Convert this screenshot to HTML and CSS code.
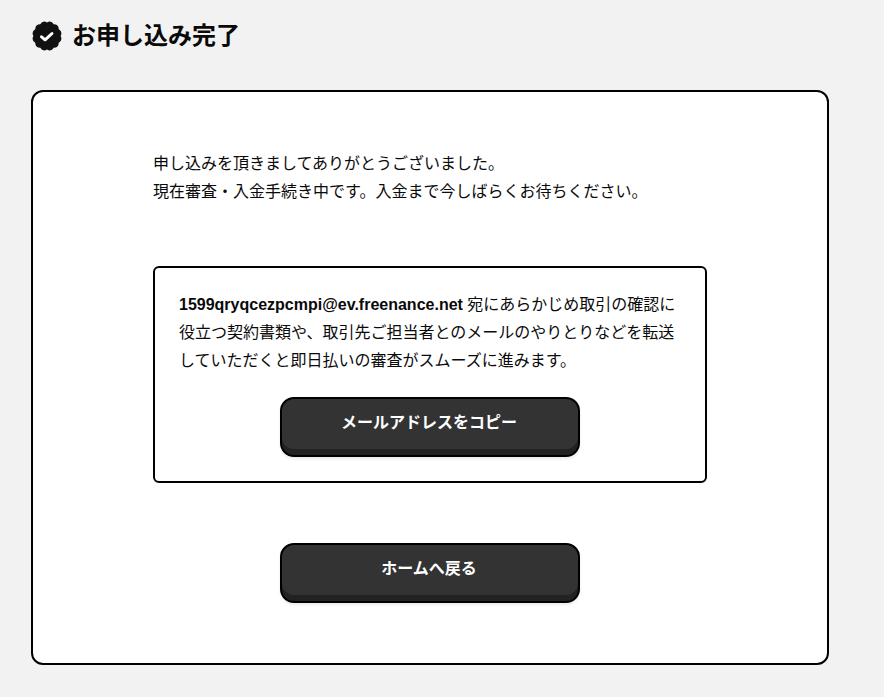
FILE: index.html
```html
<!DOCTYPE html>
<html lang="ja">
<head>
	<meta charset="utf-8">
	<title>お申し込み完了</title>
	<link rel="stylesheet" href="styles.css">
</head>
<body>
	<div class="wrapper">
		<h1 class="pageTitle">
			<svg class="titleIcon" viewBox="0 0 30 30" width="30" height="30">
				<path fill="#111" d="M28.6 15Q30.94 10.73 26.78 8.2Q26.67 3.33 21.8 3.22Q19.27 -.94 15 1.4Q10.73 -.94 8.2 3.22Q3.33 3.33 3.22 8.2Q-.94 10.73 1.4 15Q-.94 19.27 3.22 21.8Q3.33 26.67 8.2 26.78Q10.73 30.94 15 28.6Q19.27 30.94 21.8 26.78Q26.67 26.67 26.78 21.8Q30.94 19.27 28.6 15z"/>
				<path fill="none" stroke="#fff" stroke-width="3" stroke-linecap="round" stroke-linejoin="round" d="M9.5 15.8l3.6 3 6.9-6.3"/>
			</svg>
			<span class="titleText">お申し込み完了</span>
		</h1>
		<div class="card">
			<p class="intro">申し込みを頂きましてありがとうございました。<br>現在審査・入金手続き中です。入金まで今しばらくお待ちください。</p>
			<div class="notice">
				<p class="noticeText"><b class="mail">1599qryqcezpcmpi@ev.freenance.net</b> 宛にあらかじめ取引の確認に<br>役立つ契約書類や、取引先ご担当者とのメールのやりとりなどを転送<br>していただくと即日払いの審査がスムーズに進みます。</p>
				<a class="btn">メールアドレスをコピー</a>
			</div>
			<a class="btn homeBtn">ホームへ戻る</a>
		</div>
	</div>
</body>
</html>
```

FILE: styles.css
```css
*{
	padding:0;
	margin:0;
	box-sizing: border-box;
}
body{
	background-color: #f2f2f2;
	color: #0a0a0a;
	font-family: "Liberation Sans", "Noto Sans CJK JP", sans-serif;
}
.wrapper{
	width:884px;
	height:697px;
	padding:16px 55px 0 31px;
	overflow: hidden;
}
.pageTitle{
	display: flex;
	align-items: center;
	gap:11px;
	height:38px;
	font-size:24px;
	font-weight: bold;
}
.titleIcon{
	flex-shrink: 0;
	margin:2px -1px 0 1px;
}
.titleText{
	margin-bottom:4px;
}
.card{
	display: flex;
	flex-direction: column;
	align-items: center;
	height:575px;
	margin-top:36px;
	padding-top:58px;
	background-color: #fff;
	border:2px solid #000;
	border-radius:12px;
}
.intro{
	width:552px;
	font-size:16px;
	line-height:28px;
	margin-left:-2px;
}
.notice{
	display: flex;
	flex-direction: column;
	align-items: center;
	width:554px;
	height:217px;
	margin-top:60px;
	padding:23px 24px 0;
	border:2px solid #000;
	border-radius:6px;
}
.noticeText{
	width:100%;
	font-size:16px;
	line-height:28px;
	white-space: nowrap;
}
.btn{
	display: block;
	width:300px;
	height:60px;
	margin-top:22px;
	padding:12px 2px 0 0;
	background-color: #333;
	border:2px solid #000;
	border-radius:14px;
	box-shadow: inset 0 -6px 0 #222, 0 2px 3px rgba(0,0,0,0.08);
	color:#fff;
	font-size:16px;
	font-weight: bold;
	line-height:24px;
	text-align: center;
}
.homeBtn{
	margin-top:60px;
}
```
